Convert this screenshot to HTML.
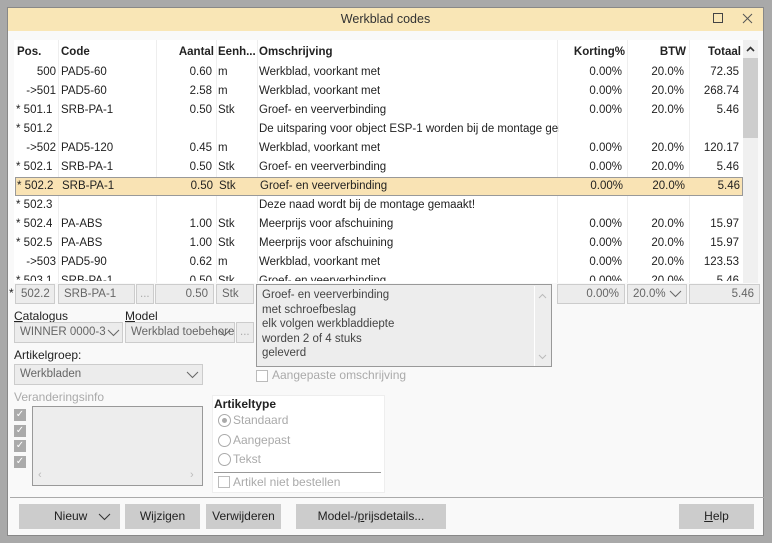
<!DOCTYPE html>
<html><head><style>
*{box-sizing:border-box;margin:0;padding:0}
body{width:772px;height:543px;background:#a9a9a9;font-family:"Liberation Sans",sans-serif;font-size:11.5px;color:#222;position:relative;overflow:hidden}
.a{position:absolute}
#win{left:7px;top:7px;width:757px;height:529px;background:#f9f9f9;border:1px solid #888}
#title{left:8px;top:8px;width:755px;height:23px;background:#f9e6b6;text-align:center;line-height:23px;font-size:12.5px;color:#333}
#grid{left:14px;top:40px;width:744px;height:243px;background:#fff;overflow:hidden}
.hdr{font-weight:bold;top:2px;height:20px;line-height:20px}
.row{position:absolute;left:0;width:729px;height:19px;line-height:19px}
.row span{position:absolute;white-space:nowrap;overflow:hidden}
.vl{position:absolute;top:0;width:1px;height:243px;background:#eee}
.r{text-align:right}
.sel{background:#f9e3b4;border:1px solid #999}
.fld{position:absolute;height:20px;background:#ececec;border:1px solid #ccc;line-height:18px;padding:0 5px;color:#666;white-space:nowrap;overflow:hidden}
.btn{position:absolute;top:504px;height:25px;background:#cccccc;line-height:25px;text-align:center;font-size:12px}
.lbl{position:absolute;font-size:12px}
.chk{position:absolute;width:12px;height:12px;background:#aaa;color:#fff;font-size:10px;line-height:12px;text-align:center}
.rad{position:absolute;width:13px;height:13px;border:1px solid #aaa;border-radius:50%;background:#fff}
.dis{color:#aaa}
.cv{position:absolute;width:13px;height:8px}
</style></head><body>
<div id="win" class="a"></div>
<div id="title" class="a">Werkblad codes</div>
<div class="a" style="left:713px;top:13px;width:10px;height:10px;border:1px solid #444"></div>
<svg class="a" style="left:742px;top:13px" width="11" height="11"><path d="M1 1L10 10M10 1L1 10" stroke="#555" stroke-width="1"/></svg>

<div id="grid" class="a">
<div class="vl" style="left:44px"></div><div class="vl" style="left:142px"></div><div class="vl" style="left:202px"></div><div class="vl" style="left:243px"></div><div class="vl" style="left:543px"></div><div class="vl" style="left:613px"></div><div class="vl" style="left:675px"></div>
<div class="a hdr" style="left:3px">Pos.</div>
<div class="a hdr" style="left:47px">Code</div>
<div class="a hdr r" style="left:142px;width:58px">Aantal</div>
<div class="a hdr" style="left:204px">Eenh...</div>
<div class="a hdr" style="left:245px">Omschrijving</div>
<div class="a hdr r" style="left:543px;width:68px">Korting%</div>
<div class="a hdr r" style="left:613px;width:59px">BTW</div>
<div class="a hdr r" style="left:675px;width:52px">Totaal</div>
<div class="a" style="left:729px;top:0;width:15px;height:243px;background:#f0f0f0"></div>
<div class="a" style="left:729px;top:18px;width:15px;height:80px;background:#cdcdcd"></div>
<svg class="a" style="left:732px;top:6px" width="9" height="6"><path d="M1 5L4.5 1.5L8 5" stroke="#333" stroke-width="1.6" fill="none"/></svg>
</div>

<div id="rows" class="a" style="left:14px;top:63px;width:744px;height:218px;overflow:hidden">
<div class="row" style="top:0"><span class="r" style="left:0;width:42px">500</span><span style="left:47px">PAD5-60</span><span class="r" style="left:142px;width:56px">0.60</span><span style="left:204px">m</span><span style="left:245px">Werkblad, voorkant met</span><span class="r" style="left:543px;width:65px">0.00%</span><span class="r" style="left:613px;width:57px">20.0%</span><span class="r" style="left:675px;width:50px">72.35</span></div>
<div class="row" style="top:19px"><span class="r" style="left:0;width:42px">-&gt;501</span><span style="left:47px">PAD5-60</span><span class="r" style="left:142px;width:56px">2.58</span><span style="left:204px">m</span><span style="left:245px">Werkblad, voorkant met</span><span class="r" style="left:543px;width:65px">0.00%</span><span class="r" style="left:613px;width:57px">20.0%</span><span class="r" style="left:675px;width:50px">268.74</span></div>
<div class="row" style="top:38px"><span style="left:2px">* 501.1</span><span style="left:47px">SRB-PA-1</span><span class="r" style="left:142px;width:56px">0.50</span><span style="left:204px">Stk</span><span style="left:245px">Groef- en veerverbinding</span><span class="r" style="left:543px;width:65px">0.00%</span><span class="r" style="left:613px;width:57px">20.0%</span><span class="r" style="left:675px;width:50px">5.46</span></div>
<div class="row" style="top:57px"><span style="left:2px">* 501.2</span><span style="left:245px;width:300px">De uitsparing voor object ESP-1 worden bij de montage gemaakt</span></div>
<div class="row" style="top:76px"><span class="r" style="left:0;width:42px">-&gt;502</span><span style="left:47px">PAD5-120</span><span class="r" style="left:142px;width:56px">0.45</span><span style="left:204px">m</span><span style="left:245px">Werkblad, voorkant met</span><span class="r" style="left:543px;width:65px">0.00%</span><span class="r" style="left:613px;width:57px">20.0%</span><span class="r" style="left:675px;width:50px">120.17</span></div>
<div class="row" style="top:95px"><span style="left:2px">* 502.1</span><span style="left:47px">SRB-PA-1</span><span class="r" style="left:142px;width:56px">0.50</span><span style="left:204px">Stk</span><span style="left:245px">Groef- en veerverbinding</span><span class="r" style="left:543px;width:65px">0.00%</span><span class="r" style="left:613px;width:57px">20.0%</span><span class="r" style="left:675px;width:50px">5.46</span></div>
<div class="row sel" style="top:114px;left:1px;width:728px;line-height:17px"><span style="left:1px">* 502.2</span><span style="left:46px">SRB-PA-1</span><span class="r" style="left:141px;width:56px">0.50</span><span style="left:203px">Stk</span><span style="left:244px">Groef- en veerverbinding</span><span class="r" style="left:542px;width:65px">0.00%</span><span class="r" style="left:612px;width:57px">20.0%</span><span class="r" style="left:674px;width:50px">5.46</span></div>
<div class="row" style="top:133px"><span style="left:2px">* 502.3</span><span style="left:245px">Deze naad wordt bij de montage gemaakt!</span></div>
<div class="row" style="top:152px"><span style="left:2px">* 502.4</span><span style="left:47px">PA-ABS</span><span class="r" style="left:142px;width:56px">1.00</span><span style="left:204px">Stk</span><span style="left:245px">Meerprijs voor afschuining</span><span class="r" style="left:543px;width:65px">0.00%</span><span class="r" style="left:613px;width:57px">20.0%</span><span class="r" style="left:675px;width:50px">15.97</span></div>
<div class="row" style="top:171px"><span style="left:2px">* 502.5</span><span style="left:47px">PA-ABS</span><span class="r" style="left:142px;width:56px">1.00</span><span style="left:204px">Stk</span><span style="left:245px">Meerprijs voor afschuining</span><span class="r" style="left:543px;width:65px">0.00%</span><span class="r" style="left:613px;width:57px">20.0%</span><span class="r" style="left:675px;width:50px">15.97</span></div>
<div class="row" style="top:190px"><span class="r" style="left:0;width:42px">-&gt;503</span><span style="left:47px">PAD5-90</span><span class="r" style="left:142px;width:56px">0.62</span><span style="left:204px">m</span><span style="left:245px">Werkblad, voorkant met</span><span class="r" style="left:543px;width:65px">0.00%</span><span class="r" style="left:613px;width:57px">20.0%</span><span class="r" style="left:675px;width:50px">123.53</span></div>
<div class="row" style="top:209px"><span style="left:2px">* 503.1</span><span style="left:47px">SRB-PA-1</span><span class="r" style="left:142px;width:56px">0.50</span><span style="left:204px">Stk</span><span style="left:245px">Groef- en veerverbinding</span><span class="r" style="left:543px;width:65px">0.00%</span><span class="r" style="left:613px;width:57px">20.0%</span><span class="r" style="left:675px;width:50px">5.46</span></div>
</div>

<div class="lbl" style="left:9px;top:286px">*</div>
<div class="fld r" style="left:15px;top:284px;width:40px">502.2</div>
<div class="fld" style="left:58px;top:284px;width:77px">SRB-PA-1</div>
<div class="fld" style="left:136px;top:284px;width:18px;color:#aaa;padding:0 3px">...</div>
<div class="fld r" style="left:155px;top:284px;width:59px">0.50</div>
<div class="fld" style="left:216px;top:284px;width:38px">Stk</div>
<div class="a" style="left:256px;top:284px;width:296px;height:83px;background:#ededed;border:1px solid #999;padding:3px 5px;line-height:14.5px;font-size:11.5px;color:#444">Groef- en veerverbinding<br>met schroefbeslag<br>elk volgen werkbladdiepte<br>worden 2 of 4 stuks<br>geleverd</div>
<div class="a" style="left:534px;top:286px;width:1px;height:80px;background:#fff"></div>
<svg class="a" style="left:538px;top:293px" width="9" height="6"><path d="M1 5L4.5 1.5L8 5" stroke="#bbb" fill="none"/></svg>
<svg class="a" style="left:538px;top:354px" width="9" height="6"><path d="M1 1L4.5 4.5L8 1" stroke="#bbb" fill="none"/></svg>
<div class="fld r" style="left:557px;top:284px;width:68px">0.00%</div>
<div class="fld" style="left:627px;top:284px;width:60px">20.0%</div>
<svg class="cv" style="left:669px;top:290px"><path d="M1 1L6.5 6.5L12 1" stroke="#666" fill="none"/></svg>
<div class="fld r" style="left:689px;top:284px;width:71px">5.46</div>

<div class="lbl" style="left:14px;top:309px"><u>C</u>atalogus</div>
<div class="lbl" style="left:125px;top:309px"><u>M</u>odel</div>
<div class="fld" style="left:14px;top:322px;width:109px;height:21px;line-height:19px">WINNER 0000-3</div>
<svg class="cv" style="left:107px;top:329px"><path d="M1 1L6.5 6.5L12 1" stroke="#666" fill="none"/></svg>
<div class="fld" style="left:125px;top:322px;width:110px;height:21px;line-height:19px;padding-right:22px">Werkblad toebehoren</div>
<svg class="cv" style="left:218px;top:329px"><path d="M1 1L6.5 6.5L12 1" stroke="#666" fill="none"/></svg>
<div class="fld" style="left:236px;top:322px;width:18px;height:21px;color:#aaa;padding:0 3px">...</div>
<div class="lbl" style="left:14px;top:348px">Artikel<u>g</u>roep:</div>
<div class="fld" style="left:14px;top:364px;width:189px;height:21px;line-height:19px">Werkbladen</div>
<svg class="cv" style="left:186px;top:371px"><path d="M1 1L6.5 6.5L12 1" stroke="#666" fill="none"/></svg>
<div class="a" style="left:256px;top:370px;width:12px;height:12px;border:1px solid #bbb;background:#fff"></div>
<div class="lbl dis" style="left:272px;top:368px">Aangepaste omschrijving</div>

<div class="lbl dis" style="left:14px;top:390px">Veranderingsinfo</div>
<div class="chk" style="left:14px;top:409px">✓</div>
<div class="chk" style="left:14px;top:425px">✓</div>
<div class="chk" style="left:14px;top:440px">✓</div>
<div class="chk" style="left:14px;top:456px">✓</div>
<div class="a" style="left:32px;top:406px;width:171px;height:80px;background:#ededed;border:1px solid #999"></div>
<div class="a" style="left:38px;top:469px;color:#bbb;font-size:11px">‹</div>
<div class="a" style="left:190px;top:469px;color:#bbb;font-size:11px">›</div>

<div class="a" style="left:212px;top:395px;width:173px;height:98px;background:#fff;border:1px solid #eee"></div>
<div class="lbl" style="left:214px;top:397px;font-weight:bold">Artikeltype</div>
<div class="rad" style="left:218px;top:414px"><div class="a" style="left:3px;top:3px;width:5px;height:5px;border-radius:50%;background:#aaa"></div></div>
<div class="lbl dis" style="left:233px;top:413px">Standaard</div>
<div class="rad" style="left:218px;top:434px"></div>
<div class="lbl dis" style="left:233px;top:433px">Aangepast</div>
<div class="rad" style="left:218px;top:453px"></div>
<div class="lbl dis" style="left:233px;top:452px">Tekst</div>
<div class="a" style="left:214px;top:472px;width:167px;height:1px;background:#999"></div>
<div class="a" style="left:218px;top:476px;width:12px;height:12px;border:1px solid #bbb;background:#fff"></div>
<div class="lbl dis" style="left:233px;top:475px">Artikel niet bestellen</div>

<div class="a" style="left:10px;top:497px;width:754px;height:1px;background:#aaa"></div>
<div class="btn" style="left:19px;width:101px;text-align:left;padding-left:35px">Nieuw</div>
<svg class="cv" style="left:98px;top:513px"><path d="M1 1L6.5 6.5L12 1" stroke="#333" fill="none"/></svg>
<div class="btn" style="left:125px;width:75px">Wijzigen</div>
<div class="btn" style="left:206px;width:75px">Verwijderen</div>
<div class="btn" style="left:296px;width:150px">Model-/<u>p</u>rijsdetails...</div>
<div class="btn" style="left:679px;width:75px"><u>H</u>elp</div>
</body></html>
